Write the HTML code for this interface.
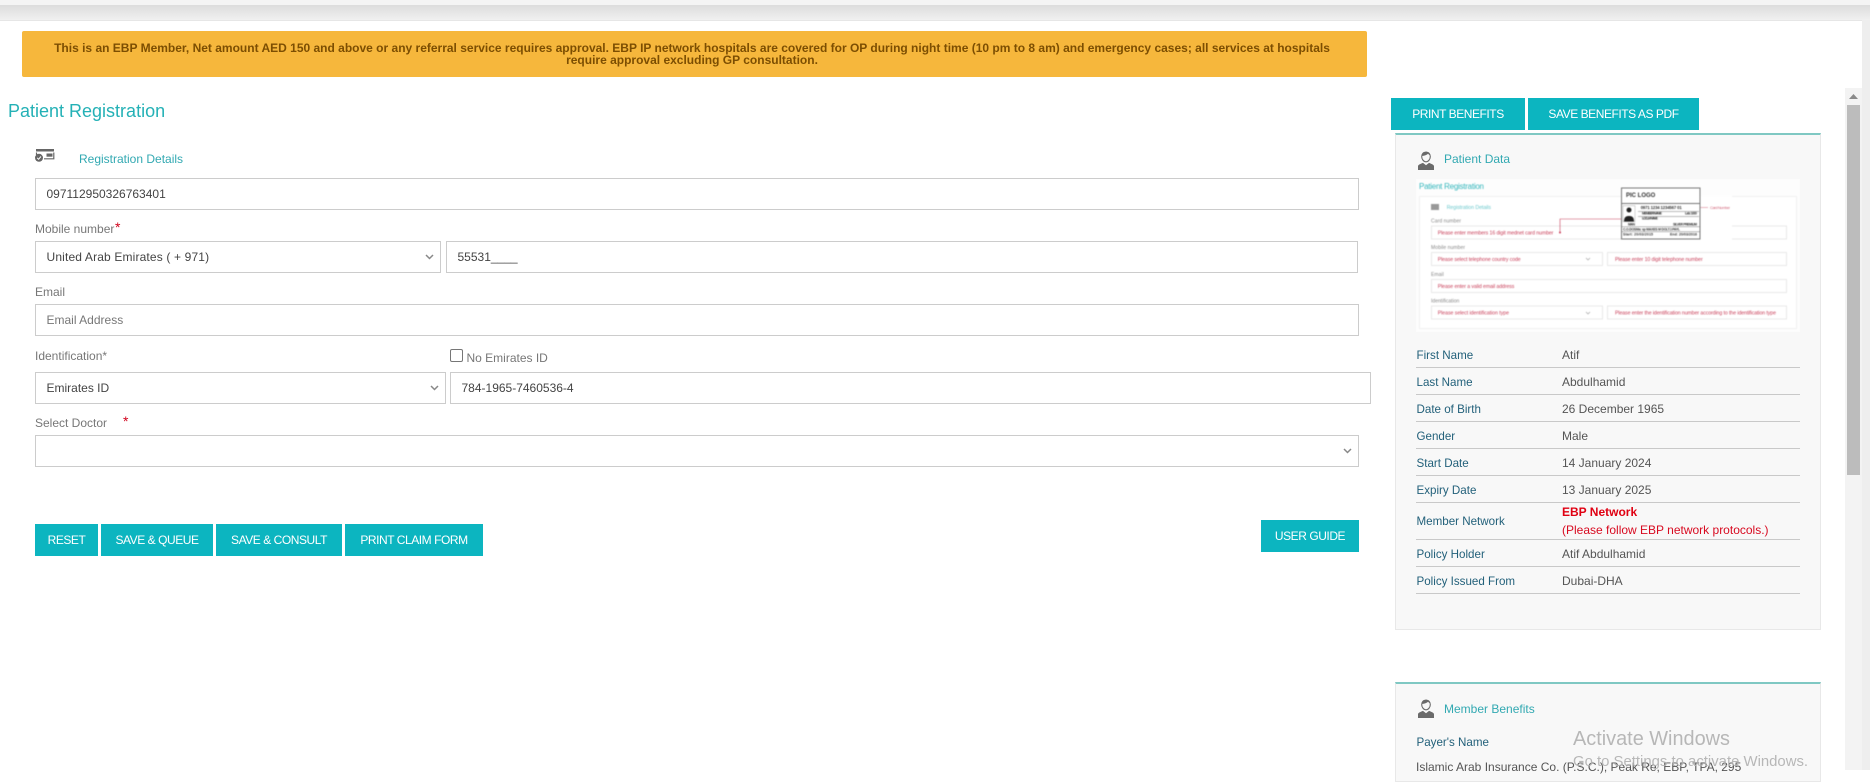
<!DOCTYPE html>
<html lang="en">
<head>
<meta charset="utf-8">
<title>Patient Registration</title>
<style>
*{box-sizing:border-box}
html,body{margin:0;padding:0;width:1870px;height:770px;overflow:hidden;background:#fff;font-family:"Liberation Sans",Arial,sans-serif}
.a{position:absolute;white-space:nowrap}
.top1{position:absolute;left:0;top:0;width:1870px;height:5px;background:#f4f4f4}
.top2{position:absolute;left:0;top:5px;width:1870px;height:16px;background:linear-gradient(#dcdcdc,#f0f0f0);border-bottom:1px solid #e6e6e6}
.alert{position:absolute;left:22px;top:31px;width:1345px;height:46px;background:#f6b73c;border-radius:2px;color:#7c4e02;font-weight:700;font-size:12px;line-height:12px;text-align:center;padding:11px 23px 0 18px}
h1{position:absolute;left:8px;top:100px;margin:0;font-weight:400;font-size:18px;line-height:22px;color:#24b1b6;white-space:nowrap}
.lab{position:absolute;font-size:12px;line-height:14px;color:#777;white-space:nowrap}
.star{position:absolute;color:#d0021b;font-size:14px;line-height:14px}
.f{position:absolute;margin:0;background:#fff;border:1px solid #ccc;border-radius:0;padding:0 10.500px;font:12px "Liberation Sans",Arial,sans-serif;color:#444;outline:0;appearance:none;-webkit-appearance:none}
.f::placeholder{color:#777;opacity:1}
.btn{position:absolute;background:#0cb5c0;color:#fff;border:0;padding:0;font:12px "Liberation Sans",Arial,sans-serif;letter-spacing:-.45px;text-align:center;height:32px;line-height:32px}
.chev{position:absolute;width:9px;height:6px}
.panel{position:absolute;left:1395px;width:426px;background:#f8f8f8;border:1px solid #e8e8e8;border-top:2px solid #7fc8c3}
.ph{position:absolute;font-size:12px;line-height:14px;color:#32a9b2;white-space:nowrap}
.k{position:absolute;left:1416.500px;font-size:11.600px;line-height:14px;color:#22607a;white-space:nowrap}
.v{position:absolute;left:1562px;font-size:12px;line-height:14px;color:#555;white-space:nowrap}
.hr{position:absolute;left:1416px;width:384px;height:1px;background:#c9c9c9}
.wm1{position:absolute;left:1573px;top:727px;font-size:19.900px;line-height:24px;color:#b0b0b0;opacity:.9;white-space:nowrap}
.wm2{position:absolute;left:1573px;top:753px;font-size:14.900px;line-height:18px;color:#b0b0b0;opacity:.9;white-space:nowrap}
</style>
</head>
<body>
<div class="top1"></div>
<div class="top2"></div>

<div class="alert">This is an EBP Member, Net amount AED 150 and above or any referral service requires approval. EBP IP network hospitals are covered for OP during night time (10 pm to 8 am) and emergency cases; all services at hospitals<br>require approval excluding GP consultation.</div>

<h1>Patient Registration</h1>

<svg class="a" style="left:35px;top:149px" width="20" height="13" viewBox="0 0 20 13">
<rect x="1" y="0" width="18" height="2.500" fill="#666"/>
<path d="M1.500 3.500V6M18.800 3.500V9.800H9" fill="none" stroke="#666" stroke-width="1.200"/>
<rect x="11.500" y="4.500" width="6" height="3.200" fill="#666"/>
<circle cx="4" cy="8.800" r="4" fill="#666"/>
<path d="M2.200 8.800l1.400 1.500 2.300-2.800" fill="none" stroke="#fff" stroke-width="1"/>
</svg>
<div class="ph" style="left:79px;top:152px">Registration Details</div>

<input class="f" style="left:35px;top:178px;width:1324px;height:32px" value="097112950326763401">

<div class="lab" style="left:35px;top:222px">Mobile number</div>
<div class="star" style="left:115px;top:220px">*</div>
<select class="f" style="left:35px;top:241px;width:406px;height:32px;letter-spacing:.15px"><option>United Arab Emirates ( + 971)</option></select>
<svg class="chev" style="left:425px;top:254px" viewBox="0 0 9 6"><path d="M1 1l3.500 3.500L8 1" fill="none" stroke="#888" stroke-width="1.500"/></svg>
<input class="f" style="left:446px;top:241px;width:912px;height:32px" value="55531____">

<div class="lab" style="left:35px;top:285px">Email</div>
<input class="f" style="left:35px;top:304px;width:1324px;height:32px" placeholder="Email Address">

<div class="lab" style="left:35px;top:349px">Identification*</div>
<div class="a" style="left:450px;top:349px;width:13px;height:13px;background:#fff;border:1px solid #767676;border-radius:2px"></div>
<div class="lab" style="left:466.500px;top:351px">No Emirates ID</div>
<select class="f" style="left:35px;top:372px;width:411px;height:32px"><option>Emirates ID</option></select>
<svg class="chev" style="left:430px;top:385px" viewBox="0 0 9 6"><path d="M1 1l3.500 3.500L8 1" fill="none" stroke="#888" stroke-width="1.500"/></svg>
<input class="f" style="left:450px;top:372px;width:921px;height:32px" value="784-1965-7460536-4">

<div class="lab" style="left:35px;top:416px">Select Doctor</div>
<div class="star" style="left:123px;top:414px">*</div>
<select class="f" style="left:35px;top:435px;width:1324px;height:32px"><option></option></select>
<svg class="chev" style="left:1343px;top:448px" viewBox="0 0 9 6"><path d="M1 1l3.500 3.500L8 1" fill="none" stroke="#888" stroke-width="1.500"/></svg>

<button class="btn" style="left:35px;top:524px;width:63px">RESET</button>
<button class="btn" style="left:101px;top:524px;width:112px">SAVE &amp; QUEUE</button>
<button class="btn" style="left:216px;top:524px;width:126px">SAVE &amp; CONSULT</button>
<button class="btn" style="left:345px;top:524px;width:138px">PRINT CLAIM FORM</button>
<button class="btn" style="left:1261px;top:520px;width:98px">USER GUIDE</button>

<button class="btn" style="left:1391px;top:98px;width:134px">PRINT BENEFITS</button>
<button class="btn" style="left:1528px;top:98px;width:171px">SAVE BENEFITS AS PDF</button>

<div class="panel" style="top:133px;height:497px"></div>
<div class="panel" style="top:682px;height:100px"></div>

<svg class="a" style="left:1418px;top:151px" width="16" height="19" viewBox="0 0 16 19">
<path d="M8 1.200c2.800 0 4.300 1.900 4.300 4.400S10.400 10.800 8 10.800 3.700 8.100 3.700 5.600 5.200 1.200 8 1.200z" fill="#f8f8f8" stroke="#6a6a6a" stroke-width="1.100"/>
<path d="M4 5c2.200-.1 5.200-1.200 6-2.200.6.700 1.600 1.300 2.200 1.600C11.600 2 9.800.8 8 .8S4.300 2.200 4 5z" fill="#6a6a6a"/>
<path d="M0 19v-3.800c0-1.500 3.200-2.600 5-3.300L8 14.300l3-2.400c1.800.7 5 1.800 5 3.300V19z" fill="#6a6a6a"/>
</svg>
<div class="ph" style="left:1444px;top:152px">Patient Data</div>

<svg class="a" style="left:1416px;top:179px;filter:blur(.4px)" width="384" height="153" viewBox="0 0 384 153" font-family="Liberation Sans, Arial, sans-serif">
<rect width="384" height="153" fill="#fdfdfd"/>
<rect x="3.500" y="17.500" width="377" height="132" fill="#fff" stroke="#f1f1f1"/>
<text x="3" y="10" font-size="8" fill="#35b7bd" textLength="65">Patient Registration</text>
<rect x="15" y="25" width="8" height="6" fill="#999"/>
<text x="30.700" y="30" font-size="5.200" fill="#6cc9cd" textLength="44.300">Registration Details</text>
<text x="15" y="43.500" font-size="5" fill="#888" textLength="30">Card number</text>
<rect x="15.500" y="47" width="355" height="13" fill="#fff" stroke="#e9e9e9"/>
<text x="21.700" y="55.500" font-size="5.200" fill="#c9405a" textLength="115.700">Please enter members 16 digit mednet card number</text>
<circle cx="144" cy="53.500" r="1" fill="#c9405a"/>
<path d="M144 53V40H205" fill="none" stroke="#c9405a" stroke-width=".6"/>
<text x="15" y="70" font-size="5" fill="#888" textLength="34">Mobile number</text>
<rect x="15.500" y="73.500" width="171" height="13" fill="#fff" stroke="#e9e9e9"/>
<text x="21.700" y="82" font-size="5.200" fill="#c9405a" textLength="83">Please select telephone country code</text>
<path d="M170 79l2 2 2-2" fill="none" stroke="#999" stroke-width=".6"/>
<rect x="191.500" y="73.500" width="179" height="13" fill="#fff" stroke="#e9e9e9"/>
<text x="199" y="82" font-size="5.200" fill="#c9405a" textLength="87.700">Please enter 10 digit telephone number</text>
<text x="15" y="97" font-size="5" fill="#888" textLength="12.700">Email</text>
<rect x="15.500" y="100.500" width="355" height="13" fill="#fff" stroke="#e9e9e9"/>
<text x="21.700" y="109" font-size="5.200" fill="#c9405a" textLength="76.700">Please enter a valid email address</text>
<text x="15" y="123.500" font-size="5" fill="#888" textLength="28.300">Identification</text>
<rect x="15.500" y="127" width="171" height="13" fill="#fff" stroke="#e9e9e9"/>
<text x="21.700" y="135.500" font-size="5.200" fill="#c9405a" textLength="71.300">Please select identification type</text>
<path d="M170 133l2 2 2-2" fill="none" stroke="#999" stroke-width=".6"/>
<rect x="191.500" y="127" width="179" height="13" fill="#fff" stroke="#e9e9e9"/>
<text x="199" y="135.500" font-size="5.200" fill="#c9405a" textLength="161">Please enter the identification number according to the identification type</text>
<rect x="284" y="17" width="32" height="44" fill="#fff"/>
<path d="M267 28.500H292" stroke="#d46a7e" stroke-width=".6"/>
<text x="294" y="30" font-size="4" fill="#d46a7e" textLength="20">Card Number</text>
<rect x="205.500" y="9" width="78.500" height="51" fill="#fff" stroke="#777" stroke-width="1"/>
<text x="210" y="18" font-size="6" font-weight="700" fill="#333">PIC LOGO</text>
<path d="M205 24.500H284" stroke="#777"/>
<rect x="207" y="26.700" width="12" height="16" fill="#fff" stroke="#aaa" stroke-width=".5"/>
<circle cx="213" cy="31" r="2.500" fill="#222"/>
<path d="M208 42.500c0-4.500 2-5.500 5-5.500s5 1 5 5.500z" fill="#222"/>
<text x="224.700" y="30.200" font-size="4.200" font-weight="700" fill="#333" textLength="41">0971 1234 1234567 01</text>
<text x="226" y="35.500" font-size="3.500" font-weight="700" fill="#333" textLength="20">MEMBER NAME</text>
<text x="269" y="35.500" font-size="3.500" font-weight="700" fill="#333" textLength="12">Lab: 1000</text>
<text x="226" y="40.500" font-size="3.500" font-weight="700" fill="#333" textLength="16">LOCUM NAME</text>
<path d="M222 32.500H283M222 37.500H283M206 47.700H284M206 52.700H284" stroke="#777" stroke-width=".5"/>
<text x="212" y="46.500" font-size="3.500" font-weight="700" fill="#333" textLength="7">MAN</text>
<text x="257" y="46.500" font-size="3.300" font-weight="700" fill="#333" textLength="24">SILVER PREMIUM</text>
<text x="207" y="51.500" font-size="3.400" font-weight="700" fill="#333" textLength="57">C.O.DOSMa: sp MAXES M DOLTJ.PAYL</text>
<text x="207" y="56.500" font-size="3.500" font-weight="700" fill="#333" textLength="30">Start: 20/03/2015</text>
<text x="254" y="56.500" font-size="3.500" font-weight="700" fill="#333" textLength="27">End: 20/03/2016</text>
</svg>

<div class="k" style="top:349px">First Name</div><div class="v" style="top:348px">Atif</div><div class="hr" style="top:367px"></div>
<div class="k" style="top:376px">Last Name</div><div class="v" style="top:375px">Abdulhamid</div><div class="hr" style="top:394px"></div>
<div class="k" style="top:403px">Date of Birth</div><div class="v" style="top:402px">26 December 1965</div><div class="hr" style="top:421px"></div>
<div class="k" style="top:430px">Gender</div><div class="v" style="top:429px">Male</div><div class="hr" style="top:448px"></div>
<div class="k" style="top:457px">Start Date</div><div class="v" style="top:456px">14 January 2024</div><div class="hr" style="top:475px"></div>
<div class="k" style="top:484px">Expiry Date</div><div class="v" style="top:483px">13 January 2025</div><div class="hr" style="top:502px"></div>
<div class="k" style="top:515px">Member Network</div>
<div class="v" style="top:505px;color:#e00012;font-weight:700">EBP Network</div>
<div class="v" style="top:523px;color:#d80a20">(Please follow EBP network protocols.)</div>
<div class="hr" style="top:539px"></div>
<div class="k" style="top:548px">Policy Holder</div><div class="v" style="top:547px">Atif Abdulhamid</div><div class="hr" style="top:566px"></div>
<div class="k" style="top:575px">Policy Issued From</div><div class="v" style="top:574px">Dubai-DHA</div><div class="hr" style="top:593px"></div>

<svg class="a" style="left:1418px;top:699px" width="16" height="19" viewBox="0 0 16 19">
<path d="M8 1.200c2.800 0 4.300 1.900 4.300 4.400S10.400 10.800 8 10.800 3.700 8.100 3.700 5.600 5.200 1.200 8 1.200z" fill="#f8f8f8" stroke="#6a6a6a" stroke-width="1.100"/>
<path d="M4 5c2.200-.1 5.200-1.200 6-2.200.6.700 1.600 1.300 2.200 1.600C11.600 2 9.800.8 8 .8S4.300 2.200 4 5z" fill="#6a6a6a"/>
<path d="M0 19v-3.800c0-1.500 3.200-2.600 5-3.300L8 14.300l3-2.400c1.800.7 5 1.800 5 3.300V19z" fill="#6a6a6a"/>
</svg>
<div class="ph" style="left:1444px;top:702px">Member Benefits</div>
<div class="k" style="top:736px">Payer's Name</div>
<div class="v" style="left:1416px;top:760px">Islamic Arab Insurance Co. (P.S.C.), Peak Re, EBP, TPA, 295</div>

<div class="a" style="left:1845px;top:88px;width:17px;height:682px;background:#f3f3f3"></div>
<div class="a" style="left:1862px;top:20px;width:8px;height:750px;background:#eeeeee"></div>
<div class="a" style="left:1847px;top:105px;width:13px;height:370px;background:#bcbcbc"></div>
<svg class="a" style="left:1849px;top:94px" width="9" height="5" viewBox="0 0 9 5"><path d="M4.500 0L9 5H0z" fill="#8a8a8a"/></svg>

<div class="wm1">Activate Windows</div>
<div class="wm2">Go to Settings to activate Windows.</div>
</body>
</html>
